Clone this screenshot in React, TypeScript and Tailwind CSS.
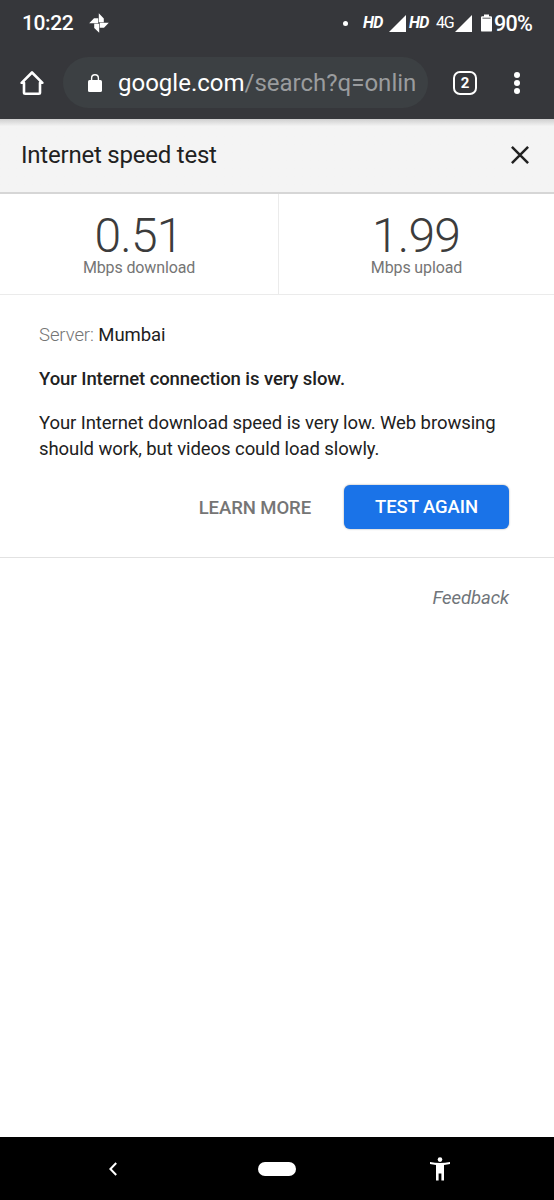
interface StatProps {
	value: string;
	label: string;
	className?: string;
}

function PhotosIcon() {
	return (
		<svg viewBox="0 0 20 20" className="ml-3.5 size-5" fill="#fff">
			<path d="M9.800 .2v9h5V5.400zM19.800 9.800h-9v5h4.200zM10.200 19.800v-9h-5v4.200zM.2 10.200h9v-5H5z" />
		</svg>
	);
}

function HomeIcon() {
	return (
		<svg viewBox="0 0 26 26" className="size-[26px]" fill="none" stroke="#fff" strokeWidth="2.6" strokeLinejoin="round">
			<path d="M13 2.5 2.6 12.800H5v9.700q0 1.200 1.200 1.200h13.600q1.200 0 1.200-1.200v-9.700h2.400z" />
		</svg>
	);
}

function LockIcon() {
	return (
		<svg viewBox="0 0 14 18" className="ml-[25px] h-[18px] w-3.5">
			<rect y="6" width="14" height="12" rx="1.6" fill="#fff" />
			<path d="M3.6 7V4.200a3.400 3.400 0 0 1 6.800 0V7" fill="none" stroke="#fff" strokeWidth="1.4" />
		</svg>
	);
}

function SignalIcon() {
	return (
		<svg viewBox="0 0 17 17" className="size-[17px]" fill="#fff">
			<path d="M17 0v17H0z" />
		</svg>
	);
}

function BatteryIcon() {
	return (
		<svg viewBox="0 0 11 18" className="ml-[9px] h-[18px] w-[11px]">
			<path d="M3 .5h5v1.700h1.800q1.200 0 1.200 1.200v13q0 1.200-1.200 1.200H1.200Q0 17.600 0 16.400v-13q0-1.200 1.200-1.200H3z" fill="#fff" />
			<path d="M1.500 4.200h8" stroke="#36373b" strokeWidth="0.8" />
		</svg>
	);
}

function Stat({ value, label, className = "" }: StatProps) {
	return (
		<div className={`flex flex-col items-center pt-3.5 ${className}`}>
			<div className="pr-px text-[48px] leading-[56px] font-light tracking-[-0.8px] text-[#3c3c3c]">{value}</div>
			<div className="-mt-1 text-[16px] leading-4 tracking-[-0.13px] text-[#757575]">{label}</div>
		</div>
	);
}

function StatusBar() {
	return (
		<div className="flex h-[46px] items-center pl-[22px] text-white">
			<span className="w-[53px] pt-0.5 text-[21px] font-medium tracking-[-0.4px]">10:22</span>
			<PhotosIcon />
			<div className="ml-[234px] size-[5px] rounded-full bg-white" />
			<span className="ml-[15px] w-[26px] text-[16px] font-bold tracking-[-0.8px] italic">HD</span>
			<SignalIcon />
			<span className="ml-[3px] w-[26px] text-[16px] font-bold tracking-[-0.8px] italic">HD</span>
			<span className="w-5 pl-px text-[16px] tracking-[-1.3px]">4G</span>
			<SignalIcon />
			<BatteryIcon />
			<span className="ml-0.5 pt-0.5 text-[21.5px] font-medium tracking-[-0.7px]">90%</span>
		</div>
	);
}

function Toolbar() {
	return (
		<div className="flex h-[73px] items-center pl-[19px]">
			<HomeIcon />
			<div className="ml-[18px] flex h-[51px] w-[365px] items-center rounded-full bg-[#3c4043]">
				<LockIcon />
				<span className="ml-4 pt-px text-[24px] whitespace-nowrap text-white">
					google.com<span className="text-[#9a9c9e]">/search?q=onlin</span>
				</span>
			</div>
			<div className="ml-[25px] flex size-6 items-center justify-center rounded-[7px] border-[2.5px] border-white pt-px text-[15px] leading-none font-bold text-white">
				2
			</div>
			<div className="ml-[37px] flex flex-col gap-0.5">
				<i className="size-1.5 rounded-full bg-white" />
				<i className="size-1.5 rounded-full bg-white" />
				<i className="size-1.5 rounded-full bg-white" />
			</div>
		</div>
	);
}

function NavBar() {
	return (
		<div className="flex h-[63px] items-center bg-black">
			<svg viewBox="0 0 8 14" className="ml-[109px] h-3.5 w-2" fill="none" stroke="#fff" strokeWidth="2">
				<path d="M7.200 1 1.400 7l5.800 6" />
			</svg>
			<div className="ml-[141px] h-3.5 w-[38px] rounded-full bg-white" />
			<svg viewBox="0 0 20 24" className="ml-[134px] h-6 w-5" fill="#fff">
				<circle cx="10" cy="2.600" r="2.300" />
				<path d="M0 4.900q10 2 20 0v2.200q-3 .6-6 .8v15.600h-2.600V16.400H8.600v7.100H6V7.900Q3 7.700 0 7.100z" />
			</svg>
		</div>
	);
}

export default function App() {
	return (
		<div className="flex h-[1200px] w-[554px] flex-col overflow-hidden bg-white font-['Roboto',sans-serif] text-[#212121]">
			<header className="h-[119px] shrink-0 bg-[#36373b]">
				<StatusBar />
				<Toolbar />
			</header>

			{/* Title */}
			<div className="flex h-[75px] shrink-0 items-center justify-between border-b-2 border-[#d6d6d6] bg-[#f4f4f4] bg-linear-to-b from-[#cfcfcf] to-[#f4f4f4] to-10% pr-[25px] pb-0.5 pl-[21px]">
				<h1 className="text-[24px] tracking-[-0.22px]">Internet speed test</h1>
				<svg viewBox="0 0 18 18" className="size-[18px]" fill="none" stroke="#212121" strokeWidth="2.5">
					<path d="m.9.9 16.200 16.200M17.100.9.900 17.100" />
				</svg>
			</div>

			{/* Results */}
			<div className="flex h-[101px] shrink-0 border-b border-[#ebebeb]">
				<Stat value="0.51" label="Mbps download" className="w-[279px] border-r border-[#ebebeb]" />
				<Stat value="1.99" label="Mbps upload" className="flex-1" />
			</div>

			<main className="h-[263px] shrink-0 border-b border-[#e2e2e2] px-[39px] pt-[27px] text-[18.5px] leading-[26px] tracking-[-0.08px]">
				<p>
					<span className="font-light text-[#757575]">Server:</span> Mumbai
				</p>
				<p className="mt-[18px] font-medium">Your Internet connection is very slow.</p>
				<p className="mt-[18px] whitespace-nowrap">
					Your Internet download speed is very low. Web browsing
					<br />
					should work, but videos could load slowly.
				</p>
				<div className="mt-[23px] flex items-center justify-end pr-1.5 font-medium">
					<button className="mr-[33px] pt-px text-[#757575]">LEARN MORE</button>
					<button className="h-11 w-[165px] rounded-md bg-[#1a73e8] text-white shadow-[0_0_2px_#999]">TEST AGAIN</button>
				</div>
			</main>

			<footer className="flex-1 pt-[27px] pr-[45px] text-right text-[18.5px] leading-[26px] tracking-[-0.08px] text-[#70757a] italic">
				Feedback
			</footer>

			<NavBar />
		</div>
	);
}
